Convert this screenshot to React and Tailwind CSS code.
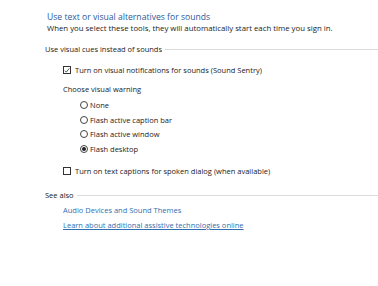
import { useState } from 'react';

function Checkbox({ checked, label, onChange }) {
    return (
        <label className="flex items-center h-[10px] cursor-default">
            <span
                onClick={onChange}
                className="w-[8px] h-[8px] border border-[#333] bg-white flex items-center justify-center shrink-0"
            >
                {checked && (
                    <svg viewBox="0 0 8 8" className="w-[7px] h-[7px]">
                        <path d="M1 4.2 L3 6.2 L7 1.2" fill="none" stroke="#222" strokeWidth="1" />
                    </svg>
                )}
            </span>
            <span className="ml-[4px]">{label}</span>
        </label>
    );
}

function Radio({ checked, label, onSelect }) {
    return (
        <div onClick={onSelect} className="flex items-center h-[14.5px] cursor-default">
            <span className="w-[8px] h-[8px] rounded-full border border-[#444] bg-white flex items-center justify-center shrink-0">
                {checked && <span className="w-[4px] h-[4px] rounded-full bg-[#222]" />}
            </span>
            <span className="ml-[2px]">{label}</span>
        </div>
    );
}

function GroupHeader({ children }) {
    return (
        <div className="flex items-center h-[10px] ml-[-2px]">
            <span>{children}</span>
            <div className="flex-1 h-px bg-[#dcdcdc] ml-[3px]" />
        </div>
    );
}

export default function App() {
    const [sentry, setSentry] = useState(true);
    const [captions, setCaptions] = useState(false);
    const [warning, setWarning] = useState('desktop');

    const options = [
        ['none', 'None'],
        ['caption', 'Flash active caption bar'],
        ['window', 'Flash active window'],
        ['desktop', 'Flash desktop'],
    ];

    return (
        <div className="w-[378px] h-[286px] bg-white pt-[11px] pl-[47px] text-[#222] text-[7.5px] leading-[10px] font-['Open_Sans',sans-serif] overflow-hidden">
            <h1 className="text-[8.6px] leading-[13px] text-[#2a5a9c] font-normal">
                Use text or visual alternatives for sounds
            </h1>
            <p className="text-[7.8px] leading-[10px] mt-[-1px]">
                When you select these tools, they will automatically start each time you sign in.
            </p>

            <div className="mt-[11px]">
                <GroupHeader>Use visual cues instead of sounds</GroupHeader>
            </div>

            <div className="mt-[11px] pl-[16px]">
                <Checkbox
                    checked={sentry}
                    onChange={() => setSentry(!sentry)}
                    label="Turn on visual notifications for sounds (Sound Sentry)"
                />
            </div>

            <div className="mt-[9px] pl-[16px] h-[10px] flex items-center">Choose visual warning</div>

            <div className="mt-[4px] pl-[33px]">
                {options.map(([key, label]) => (
                    <Radio key={key} checked={warning === key} label={label} onSelect={() => setWarning(key)} />
                ))}
            </div>

            <div className="mt-[10px] pl-[16px]">
                <Checkbox
                    checked={captions}
                    onChange={() => setCaptions(!captions)}
                    label="Turn on text captions for spoken dialog (when available)"
                />
            </div>

            <div className="mt-[14px]">
                <GroupHeader>See also</GroupHeader>
            </div>

            <div className="pl-[16px] mt-[5px] flex flex-col items-start text-[#2f6fb0]">
                <a className="h-[10px] flex items-center cursor-pointer">Audio Devices and Sound Themes</a>
                <a className="mt-[5px] h-[10px] flex items-center underline cursor-pointer">
                    Learn about additional assistive technologies online
                </a>
            </div>
        </div>
    );
}
